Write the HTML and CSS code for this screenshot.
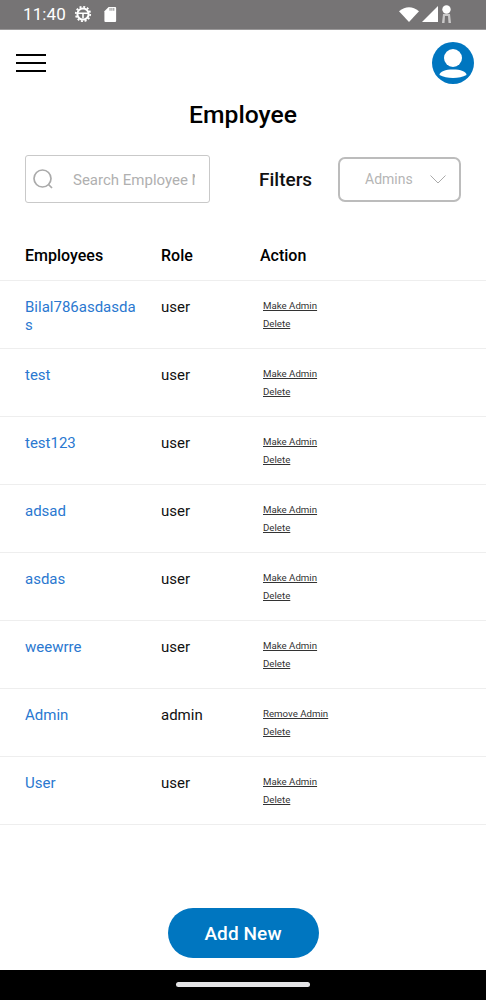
FILE: index.html
```html
<!DOCTYPE html>
<html lang="en">

<head>
    <meta charset="UTF-8">
    <meta name="viewport" content="width=device-width, initial-scale=1.0">
    <title>Employee</title>
    <link rel="stylesheet" href="styles.css">
</head>

<body>
    <div class="statusbar">
        <div class="status-left">
            <span class="clock">11:40</span>
            <svg class="status-icon" width="18" height="18" viewBox="0 0 18 18">
                <circle cx="9" cy="9" r="5.6" fill="none" stroke="#fff" stroke-width="2"/>
                <circle cx="9" cy="9" r="7.2" fill="none" stroke="#fff" stroke-width="1.8" stroke-dasharray="2 1.77"/>
                <path d="M3.5 8.2h11M9 8.2v5" stroke="#fff" stroke-width="1.6" fill="none"/>
            </svg>
            <svg class="status-icon sd" width="13" height="15" viewBox="0 0 13 16">
                <path d="M4.5 0H11.5a1 1 0 0 1 1 1V15a1 1 0 0 1-1 1H1a1 1 0 0 1-1-1V4.6Z" fill="#fff"/>
                <path d="M6 1v3M8 1v3M10 1v3" stroke="#777" stroke-width=".9"/>
            </svg>
        </div>
        <div class="status-right">
            <svg width="20" height="15" viewBox="0 0 20 15"><path d="M0 4.2Q10-3.6 20 4.2L10 15Z" fill="#fff"/></svg>
            <svg width="16" height="16" viewBox="0 0 16 16"><path d="M16 0V16H0Z" fill="#fff"/></svg>
            <svg width="11" height="18" viewBox="0 0 11 18">
                <circle cx="5.5" cy="4.5" r="4.2" fill="#fff"/>
                <path d="M2 9h7l1 9H7.5L7 11H4l-.5 7H1Z" fill="#c9c8c8"/>
            </svg>
        </div>
    </div>

    <div class="page">
        <div class="topbar">
            <div class="menu">
                <span></span>
                <span></span>
                <span></span>
            </div>
            <svg class="avatar" width="42" height="42" viewBox="0 0 42 42">
                <circle cx="21" cy="21" r="21" fill="#0076c0"/>
                <circle cx="21" cy="16" r="9" fill="#fff"/>
                <path d="M7.5 33c0-3.500 6-5.500 13.500-5.500s13.500 2 13.500 5.500c-3.500 2-8.500 3-13.500 3s-10-1-13.500-3Z" fill="#fff"/>
            </svg>
        </div>

        <h1 class="title">Employee</h1>

        <div class="filters">
            <div class="search">
                <svg width="20" height="20" viewBox="0 0 20 20">
                    <circle cx="9.500" cy="9.500" r="8.500" fill="none" stroke="#aaa" stroke-width="1.700"/>
                    <path d="M15.500 15.500l3.500 3.500" stroke="#aaa" stroke-width="1.700"/>
                </svg>
                <input type="text" placeholder="Search Employee Name" spellcheck="false">
            </div>
            <div class="filters-label">Filters</div>
            <div class="select">
                <span>Admins</span>
                <svg width="16" height="9" viewBox="0 0 16 9"><path d="M.5.5L8 8 15.500.5" fill="none" stroke="#aaa"/></svg>
            </div>
        </div>

        <div class="row head">
            <div>Employees</div>
            <div>Role</div>
            <div>Action</div>
        </div>

        <div class="row">
            <div class="name">Bilal786asdasdas</div>
            <div class="role">user</div>
            <div class="actions"><a>Make Admin</a><a>Delete</a></div>
        </div>
        <div class="row">
            <div class="name">test</div>
            <div class="role">user</div>
            <div class="actions"><a>Make Admin</a><a>Delete</a></div>
        </div>
        <div class="row">
            <div class="name">test123</div>
            <div class="role">user</div>
            <div class="actions"><a>Make Admin</a><a>Delete</a></div>
        </div>
        <div class="row">
            <div class="name">adsad</div>
            <div class="role">user</div>
            <div class="actions"><a>Make Admin</a><a>Delete</a></div>
        </div>
        <div class="row">
            <div class="name">asdas</div>
            <div class="role">user</div>
            <div class="actions"><a>Make Admin</a><a>Delete</a></div>
        </div>
        <div class="row">
            <div class="name">weewrre</div>
            <div class="role">user</div>
            <div class="actions"><a>Make Admin</a><a>Delete</a></div>
        </div>
        <div class="row">
            <div class="name">Admin</div>
            <div class="role">admin</div>
            <div class="actions"><a>Remove Admin</a><a>Delete</a></div>
        </div>
        <div class="row">
            <div class="name">User</div>
            <div class="role">user</div>
            <div class="actions"><a>Make Admin</a><a>Delete</a></div>
        </div>

        <div class="bottom">
            <button class="add">Add New</button>
        </div>
    </div>

    <div class="navbar">
        <div class="pill"></div>
    </div>
</body>

</html>
```

FILE: styles.css
```css
* {
    margin: 0;
    padding: 0;
    box-sizing: border-box;
    font-family: "Roboto", sans-serif;
}

body {
    background: #fff;
    height: 1000px;
    display: flex;
    flex-direction: column;
    overflow: hidden;
}

.statusbar {
    height: 30px;
    background: #767475;
    border-bottom: 1px solid #9a9899;
    display: flex;
    align-items: center;
    justify-content: space-between;
    padding: 0 34px 1px 23px;
    color: #fff;
}

.status-left {
    display: flex;
    align-items: center;
}

.clock {
    font-size: 17px;
    letter-spacing: .1px;
    margin-right: 8px;
}

.status-icon.sd {
    margin-left: 12px;
}

.status-right {
    display: flex;
    align-items: center;
    gap: 3px;
}

.page {
    flex: 1;
    display: flex;
    flex-direction: column;
}

.topbar {
    display: flex;
    align-items: center;
    justify-content: space-between;
    padding: 12px 12px 0 16px;
}

.menu {
    width: 30px;
    display: flex;
    flex-direction: column;
    gap: 6px;
}

.menu span {
    height: 2px;
    background: #000;
}

.title {
    font-size: 24.700px;
    font-weight: 500;
    text-align: center;
    color: #000;
    margin-top: 16px;
    line-height: 30px;
}

.filters {
    display: flex;
    align-items: center;
    padding: 0 25px;
    margin-top: 25px;
}

.search {
    width: 185px;
    height: 48px;
    border: 1px solid #c9c9c9;
    border-radius: 3px;
    display: flex;
    align-items: center;
    padding: 0 14px 0 7px;
    gap: 20px;
    flex-shrink: 0;
}

.search svg {
    flex-shrink: 0;
}

.search input {
    border: none;
    outline: none;
    background: none;
    width: 100%;
    min-width: 0;
    font-size: 15px;
    padding-top: 1px;
}

.search input::placeholder {
    color: #b0b0b0;
    opacity: 1;
}

.filters-label {
    font-size: 19px;
    font-weight: 500;
    color: #111;
    margin-left: 49px;
    width: 79px;
    flex-shrink: 0;
}

.select {
    width: 123px;
    height: 45px;
    border: 2px solid #bcbcbc;
    border-radius: 7px;
    display: flex;
    align-items: center;
    justify-content: space-between;
    padding: 0 13px 0 25px;
    color: #b5b5b5;
    font-size: 14px;
    flex-shrink: 0;
}

.row {
    height: 68px;
    display: grid;
    grid-template-columns: 136px 99px 1fr;
    padding: 16px 0 0 25px;
    border-bottom: 1px solid #eee;
    font-size: 15px;
    line-height: 20px;
}

.row.head {
    height: 57px;
    margin-top: 21px;
    padding-top: 22px;
    font-size: 16px;
    font-weight: 500;
    color: #000;
}

.name {
    color: #2a78d0;
    width: 112px;
    word-break: break-all;
    line-height: 18px;
    padding-top: 1px;
}

.role {
    color: #111;
}

.actions {
    display: flex;
    flex-direction: column;
    align-items: flex-start;
    padding: 3px 0 0 3px;
    gap: 6px;
}

.actions a {
    font-size: 9.700px;
    line-height: 12px;
    color: #333;
    text-decoration: underline;
}

.bottom {
    flex: 1;
    display: flex;
    align-items: flex-end;
    justify-content: center;
    padding-bottom: 12px;
}

.add {
    width: 151px;
    height: 50px;
    border: none;
    border-radius: 25px;
    background: #0076c0;
    color: #fff;
    font-size: 19px;
    letter-spacing: .1px;
    font-weight: 500;
}

.navbar {
    height: 30px;
    background: #000;
    display: flex;
    justify-content: center;
    padding-top: 12px;
}

.pill {
    width: 134px;
    height: 5px;
    border-radius: 3px;
    background: #e4e4e6;
}
```
